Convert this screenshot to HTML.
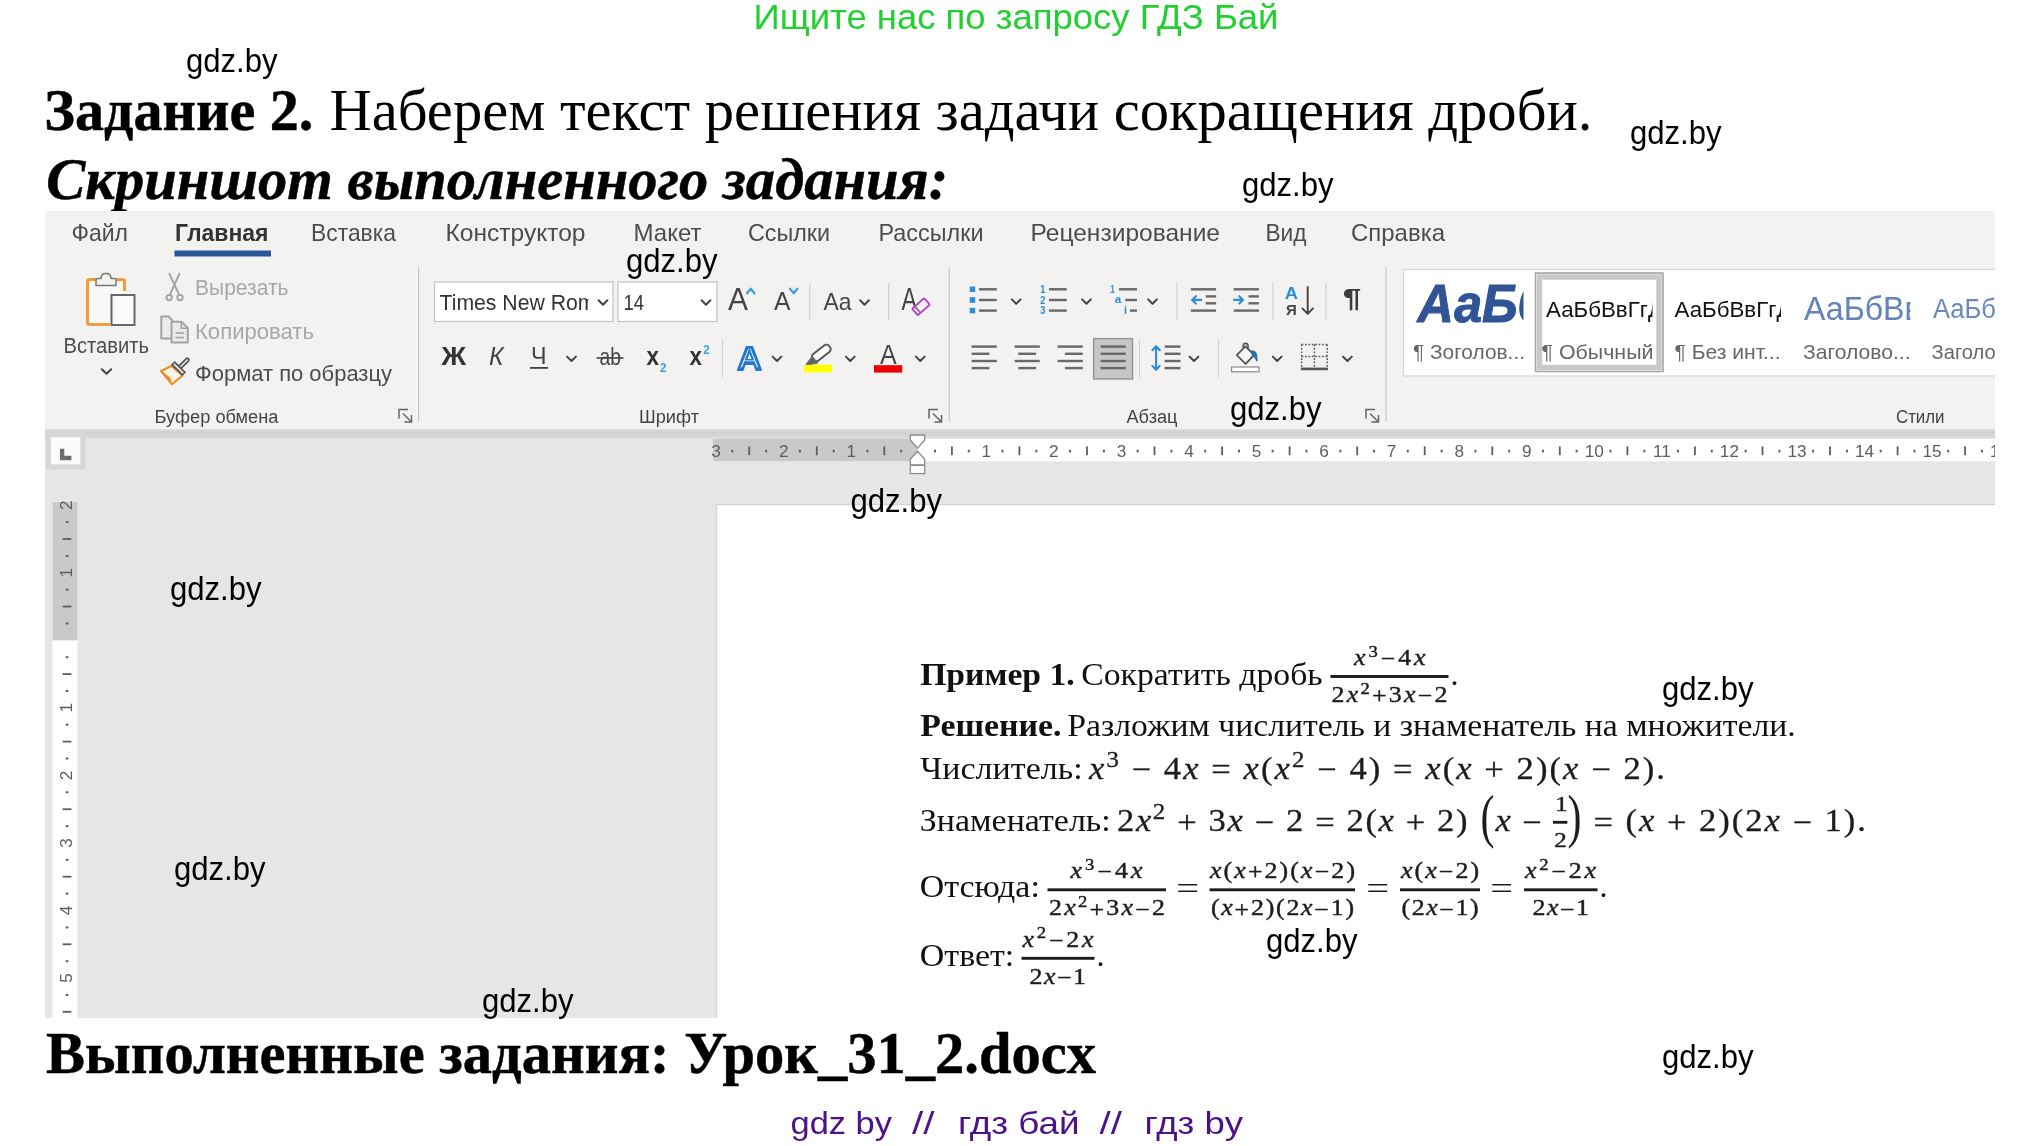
<!DOCTYPE html>
<html lang="ru"><head><meta charset="utf-8"><title>ГДЗ Задание 2</title>
<style>
html,body{margin:0;padding:0;background:#fff;}
body{width:2034px;height:1146px;overflow:hidden;position:relative;}
svg{position:absolute;left:0;top:0;display:block;will-change:transform;}
.s{font-family:"Liberation Sans",sans-serif;}
.sb{font-family:"Liberation Sans",sans-serif;font-weight:bold;}
.si{font-family:"Liberation Sans",sans-serif;font-style:italic;}
.r{font-family:"Liberation Serif",serif;}
.rb{font-family:"Liberation Serif",serif;font-weight:bold;}
.ri{font-family:"Liberation Serif",serif;font-style:italic;}
.rbi{font-family:"Liberation Serif",serif;font-weight:bold;font-style:italic;}
text{white-space:pre;}
</style></head><body>
<svg width="2034" height="1146" viewBox="0 0 2034 1146">
<text x="753.5" y="29" font-size="35.5" class="s" fill="#21cf31" textLength="525" lengthAdjust="spacingAndGlyphs">Ищите нас по запросу ГДЗ Бай</text>
<text x="44.3" y="129.5" font-size="60" class="rb" fill="#000" textLength="269" lengthAdjust="spacingAndGlyphs" stroke="#000" stroke-width="0.5">Задание 2.</text>
<text x="329.5" y="129.5" font-size="60" class="r" fill="#000" textLength="1263" lengthAdjust="spacingAndGlyphs">Наберем текст решения задачи сокращения дроби.</text>
<text x="46.2" y="198.5" font-size="60" class="rbi" fill="#000" textLength="902" lengthAdjust="spacingAndGlyphs" stroke="#000" stroke-width="0.5">Скриншот выполненного задания:</text>
<text x="46" y="1072.5" font-size="60" class="rb" fill="#000" textLength="1050" lengthAdjust="spacingAndGlyphs" stroke="#000" stroke-width="0.5">Выполненные задания: Урок_31_2.docx</text>
<text x="790.5" y="1133.5" font-size="32" class="s" fill="#4b1289" textLength="101.5" lengthAdjust="spacingAndGlyphs">gdz by</text>
<text x="912" y="1133.5" font-size="32" class="s" fill="#4b1289" textLength="22.5" lengthAdjust="spacingAndGlyphs">//</text>
<text x="958" y="1133.5" font-size="32" class="s" fill="#4b1289" textLength="121.5" lengthAdjust="spacingAndGlyphs">гдз бай</text>
<text x="1099.5" y="1133.5" font-size="32" class="s" fill="#4b1289" textLength="22.5" lengthAdjust="spacingAndGlyphs">//</text>
<text x="1144.5" y="1133.5" font-size="32" class="s" fill="#4b1289" textLength="98.5" lengthAdjust="spacingAndGlyphs">гдз by</text>
<clipPath id="shot"><rect x="45" y="211" width="1950" height="807"/></clipPath>
<g clip-path="url(#shot)">
<rect x="45" y="211" width="1950" height="807" fill="#e6e6e6"/>
<rect x="45" y="211" width="1950" height="219" fill="#f3f2f1"/>
<linearGradient id="shd" x1="0" y1="0" x2="0" y2="1"><stop offset="0" stop-color="#e2e1e0"/><stop offset="0.3" stop-color="#d0d0d0"/><stop offset="1" stop-color="#dcdcdc"/></linearGradient>
<rect x="45" y="429" width="1950" height="9.7" fill="url(#shd)"/>
<text x="71.5" y="240.5" font-size="24" class="s" fill="#4c4c4c" textLength="56.5" lengthAdjust="spacingAndGlyphs">Файл</text>
<text x="175" y="240.5" font-size="24" class="sb" fill="#333" textLength="93.5" lengthAdjust="spacingAndGlyphs">Главная</text>
<rect x="174.5" y="250.5" width="96.5" height="6" fill="#2b579a"/>
<text x="311" y="240.5" font-size="24" class="s" fill="#4c4c4c" textLength="85" lengthAdjust="spacingAndGlyphs">Вставка</text>
<text x="445.5" y="240.5" font-size="24" class="s" fill="#4c4c4c" textLength="140" lengthAdjust="spacingAndGlyphs">Конструктор</text>
<text x="633.5" y="240.5" font-size="24" class="s" fill="#4c4c4c" textLength="68" lengthAdjust="spacingAndGlyphs">Макет</text>
<text x="748" y="240.5" font-size="24" class="s" fill="#4c4c4c" textLength="82" lengthAdjust="spacingAndGlyphs">Ссылки</text>
<text x="878.5" y="240.5" font-size="24" class="s" fill="#4c4c4c" textLength="105" lengthAdjust="spacingAndGlyphs">Рассылки</text>
<text x="1030.5" y="240.5" font-size="24" class="s" fill="#4c4c4c" textLength="189.5" lengthAdjust="spacingAndGlyphs">Рецензирование</text>
<text x="1265.5" y="240.5" font-size="24" class="s" fill="#4c4c4c" textLength="41" lengthAdjust="spacingAndGlyphs">Вид</text>
<text x="1351" y="240.5" font-size="24" class="s" fill="#4c4c4c" textLength="94" lengthAdjust="spacingAndGlyphs">Справка</text>
<line x1="418.6" y1="267" x2="418.6" y2="421.5" stroke="#c8c6c4" stroke-width="1.2" />
<line x1="949.3" y1="267" x2="949.3" y2="421.5" stroke="#c8c6c4" stroke-width="1.2" />
<line x1="1386.1" y1="267" x2="1386.1" y2="421.5" stroke="#c8c6c4" stroke-width="1.2" />
<text x="154.5" y="423.2" font-size="18" class="s" fill="#444" textLength="124" lengthAdjust="spacingAndGlyphs">Буфер обмена</text>
<text x="639" y="423.2" font-size="18" class="s" fill="#444" textLength="60" lengthAdjust="spacingAndGlyphs">Шрифт</text>
<text x="1126.5" y="423.2" font-size="18" class="s" fill="#444" textLength="51" lengthAdjust="spacingAndGlyphs">Абзац</text>
<text x="1896" y="423.2" font-size="18" class="s" fill="#444" textLength="48.5" lengthAdjust="spacingAndGlyphs">Стили</text>
<path d="M408 409.5 H399 V418.5" fill="none" stroke="#666" stroke-width="1.5"/>
<path d="M403 413.5 L411 421.5 M411.5 415.0 V422.0 H404.5" fill="none" stroke="#666" stroke-width="1.5"/>
<path d="M938 409.5 H929 V418.5" fill="none" stroke="#666" stroke-width="1.5"/>
<path d="M933 413.5 L941 421.5 M941.5 415.0 V422.0 H934.5" fill="none" stroke="#666" stroke-width="1.5"/>
<path d="M1375 409.5 H1366 V418.5" fill="none" stroke="#666" stroke-width="1.5"/>
<path d="M1370 413.5 L1378 421.5 M1378.5 415.0 V422.0 H1371.5" fill="none" stroke="#666" stroke-width="1.5"/>
<text x="63.5" y="352.5" font-size="22.5" class="s" fill="#4c4c4c" textLength="85.5" lengthAdjust="spacingAndGlyphs">Вставить</text>
<path d="M101.8 369.2 L106.5 373.8 L111.2 369.2" fill="none" stroke="#444" stroke-width="2" stroke-linecap="round" stroke-linejoin="round"/>
<text x="195" y="295" font-size="22.5" class="s" fill="#a8a8a8" textLength="93.5" lengthAdjust="spacingAndGlyphs">Вырезать</text>
<text x="195" y="338.5" font-size="22.5" class="s" fill="#a8a8a8" textLength="119" lengthAdjust="spacingAndGlyphs">Копировать</text>
<text x="195" y="381" font-size="22.5" class="s" fill="#4c4c4c" textLength="197" lengthAdjust="spacingAndGlyphs">Формат по образцу</text>
<rect x="45.7" y="431.6" width="39.8" height="38" fill="#d7d7d7"/>
<rect x="50.9" y="437.2" width="29.4" height="27.2" fill="#fbfbfb"/>
<path d="M62.1 448.7 V458 H71.4" fill="none" stroke="#6e6e6e" stroke-width="4.4"/>
<rect x="713" y="438.8" width="204.5" height="22.3" fill="#c9c9c9"/>
<rect x="917.5" y="438.8" width="1077.5" height="22.5" fill="#ffffff"/>
<text x="716.15" y="456.6" font-size="17.2" class="s" fill="#5e5e5e" text-anchor="middle">3</text>
<rect x="731.3" y="449.8" width="2" height="2.6" fill="#5e5e5e"/>
<rect x="748.3" y="446.4" width="1.8" height="8.8" fill="#5e5e5e"/>
<rect x="765.1" y="449.8" width="2" height="2.6" fill="#5e5e5e"/>
<text x="783.6999999999999" y="456.6" font-size="17.2" class="s" fill="#5e5e5e" text-anchor="middle">2</text>
<rect x="798.9" y="449.8" width="2" height="2.6" fill="#5e5e5e"/>
<rect x="815.9" y="446.4" width="1.8" height="8.8" fill="#5e5e5e"/>
<rect x="832.7" y="449.8" width="2" height="2.6" fill="#5e5e5e"/>
<text x="851.25" y="456.6" font-size="17.2" class="s" fill="#5e5e5e" text-anchor="middle">1</text>
<rect x="866.4" y="449.8" width="2" height="2.6" fill="#5e5e5e"/>
<rect x="883.4" y="446.4" width="1.8" height="8.8" fill="#5e5e5e"/>
<rect x="900.2" y="449.8" width="2" height="2.6" fill="#5e5e5e"/>
<rect x="934.0" y="449.8" width="2" height="2.6" fill="#5e5e5e"/>
<rect x="951.0" y="446.4" width="1.8" height="8.8" fill="#5e5e5e"/>
<rect x="967.8" y="449.8" width="2" height="2.6" fill="#5e5e5e"/>
<text x="986.3499999999999" y="456.6" font-size="17.2" class="s" fill="#5e5e5e" text-anchor="middle">1</text>
<rect x="1001.5" y="449.8" width="2" height="2.6" fill="#5e5e5e"/>
<rect x="1018.5" y="446.4" width="1.8" height="8.8" fill="#5e5e5e"/>
<rect x="1035.3" y="449.8" width="2" height="2.6" fill="#5e5e5e"/>
<text x="1053.8999999999999" y="456.6" font-size="17.2" class="s" fill="#5e5e5e" text-anchor="middle">2</text>
<rect x="1069.1" y="449.8" width="2" height="2.6" fill="#5e5e5e"/>
<rect x="1086.1" y="446.4" width="1.8" height="8.8" fill="#5e5e5e"/>
<rect x="1102.9" y="449.8" width="2" height="2.6" fill="#5e5e5e"/>
<text x="1121.45" y="456.6" font-size="17.2" class="s" fill="#5e5e5e" text-anchor="middle">3</text>
<rect x="1136.6" y="449.8" width="2" height="2.6" fill="#5e5e5e"/>
<rect x="1153.6" y="446.4" width="1.8" height="8.8" fill="#5e5e5e"/>
<rect x="1170.4" y="449.8" width="2" height="2.6" fill="#5e5e5e"/>
<text x="1189.0" y="456.6" font-size="17.2" class="s" fill="#5e5e5e" text-anchor="middle">4</text>
<rect x="1204.2" y="449.8" width="2" height="2.6" fill="#5e5e5e"/>
<rect x="1221.2" y="446.4" width="1.8" height="8.8" fill="#5e5e5e"/>
<rect x="1238.0" y="449.8" width="2" height="2.6" fill="#5e5e5e"/>
<text x="1256.55" y="456.6" font-size="17.2" class="s" fill="#5e5e5e" text-anchor="middle">5</text>
<rect x="1271.7" y="449.8" width="2" height="2.6" fill="#5e5e5e"/>
<rect x="1288.7" y="446.4" width="1.8" height="8.8" fill="#5e5e5e"/>
<rect x="1305.5" y="449.8" width="2" height="2.6" fill="#5e5e5e"/>
<text x="1324.1" y="456.6" font-size="17.2" class="s" fill="#5e5e5e" text-anchor="middle">6</text>
<rect x="1339.3" y="449.8" width="2" height="2.6" fill="#5e5e5e"/>
<rect x="1356.3" y="446.4" width="1.8" height="8.8" fill="#5e5e5e"/>
<rect x="1373.1" y="449.8" width="2" height="2.6" fill="#5e5e5e"/>
<text x="1391.6499999999999" y="456.6" font-size="17.2" class="s" fill="#5e5e5e" text-anchor="middle">7</text>
<rect x="1406.8" y="449.8" width="2" height="2.6" fill="#5e5e5e"/>
<rect x="1423.8" y="446.4" width="1.8" height="8.8" fill="#5e5e5e"/>
<rect x="1440.6" y="449.8" width="2" height="2.6" fill="#5e5e5e"/>
<text x="1459.2" y="456.6" font-size="17.2" class="s" fill="#5e5e5e" text-anchor="middle">8</text>
<rect x="1474.4" y="449.8" width="2" height="2.6" fill="#5e5e5e"/>
<rect x="1491.4" y="446.4" width="1.8" height="8.8" fill="#5e5e5e"/>
<rect x="1508.2" y="449.8" width="2" height="2.6" fill="#5e5e5e"/>
<text x="1526.7499999999998" y="456.6" font-size="17.2" class="s" fill="#5e5e5e" text-anchor="middle">9</text>
<rect x="1541.9" y="449.8" width="2" height="2.6" fill="#5e5e5e"/>
<rect x="1558.9" y="446.4" width="1.8" height="8.8" fill="#5e5e5e"/>
<rect x="1575.7" y="449.8" width="2" height="2.6" fill="#5e5e5e"/>
<text x="1594.3" y="456.6" font-size="17.2" class="s" fill="#5e5e5e" text-anchor="middle">10</text>
<rect x="1609.5" y="449.8" width="2" height="2.6" fill="#5e5e5e"/>
<rect x="1626.5" y="446.4" width="1.8" height="8.8" fill="#5e5e5e"/>
<rect x="1643.3" y="449.8" width="2" height="2.6" fill="#5e5e5e"/>
<text x="1661.85" y="456.6" font-size="17.2" class="s" fill="#5e5e5e" text-anchor="middle">11</text>
<rect x="1677.0" y="449.8" width="2" height="2.6" fill="#5e5e5e"/>
<rect x="1694.0" y="446.4" width="1.8" height="8.8" fill="#5e5e5e"/>
<rect x="1710.8" y="449.8" width="2" height="2.6" fill="#5e5e5e"/>
<text x="1729.3999999999999" y="456.6" font-size="17.2" class="s" fill="#5e5e5e" text-anchor="middle">12</text>
<rect x="1744.6" y="449.8" width="2" height="2.6" fill="#5e5e5e"/>
<rect x="1761.6" y="446.4" width="1.8" height="8.8" fill="#5e5e5e"/>
<rect x="1778.4" y="449.8" width="2" height="2.6" fill="#5e5e5e"/>
<text x="1796.95" y="456.6" font-size="17.2" class="s" fill="#5e5e5e" text-anchor="middle">13</text>
<rect x="1812.1" y="449.8" width="2" height="2.6" fill="#5e5e5e"/>
<rect x="1829.1" y="446.4" width="1.8" height="8.8" fill="#5e5e5e"/>
<rect x="1845.9" y="449.8" width="2" height="2.6" fill="#5e5e5e"/>
<text x="1864.4999999999998" y="456.6" font-size="17.2" class="s" fill="#5e5e5e" text-anchor="middle">14</text>
<rect x="1879.7" y="449.8" width="2" height="2.6" fill="#5e5e5e"/>
<rect x="1896.7" y="446.4" width="1.8" height="8.8" fill="#5e5e5e"/>
<rect x="1913.5" y="449.8" width="2" height="2.6" fill="#5e5e5e"/>
<text x="1932.05" y="456.6" font-size="17.2" class="s" fill="#5e5e5e" text-anchor="middle">15</text>
<rect x="1947.2" y="449.8" width="2" height="2.6" fill="#5e5e5e"/>
<rect x="1964.2" y="446.4" width="1.8" height="8.8" fill="#5e5e5e"/>
<rect x="1981.0" y="449.8" width="2" height="2.6" fill="#5e5e5e"/>
<text x="1999.6" y="456.6" font-size="17.2" class="s" fill="#5e5e5e" text-anchor="middle">16</text>
<rect x="2014.8" y="449.8" width="2" height="2.6" fill="#5e5e5e"/>
<rect x="2031.8" y="446.4" width="1.8" height="8.8" fill="#5e5e5e"/>
<rect x="2048.6" y="449.8" width="2" height="2.6" fill="#5e5e5e"/>
<path d="M910.3 435 H924.7 V440 L917.5 448.3 L910.3 440 Z" fill="#fff" stroke="#8c8c8c" stroke-width="1.3" stroke-linejoin="round"/>
<path d="M910.3 464.8 V459.3 L917.5 451.2 L924.7 459.3 V464.8 Z" fill="#fff" stroke="#8c8c8c" stroke-width="1.3" stroke-linejoin="round"/>
<rect x="910.3" y="465.4" width="14.4" height="8.2" fill="#fff" stroke="#8c8c8c" stroke-width="1.3"/>
<rect x="52.5" y="502" width="25" height="138.5" fill="#c9c9c9"/>
<rect x="52.5" y="640.5" width="25" height="380" fill="#ffffff"/>
<text transform="translate(71.5 505.2) rotate(-90)" font-size="17.2" class="s" fill="#5e5e5e" text-anchor="middle">2</text>
<rect x="65.8" y="521.1" width="2.6" height="2" fill="#5e5e5e"/>
<rect x="62.6" y="538.1" width="8.8" height="1.8" fill="#5e5e5e"/>
<rect x="65.8" y="554.9" width="2.6" height="2" fill="#5e5e5e"/>
<text transform="translate(71.5 572.8) rotate(-90)" font-size="17.2" class="s" fill="#5e5e5e" text-anchor="middle">1</text>
<rect x="65.8" y="588.6" width="2.6" height="2" fill="#5e5e5e"/>
<rect x="62.6" y="605.6" width="8.8" height="1.8" fill="#5e5e5e"/>
<rect x="65.8" y="622.4" width="2.6" height="2" fill="#5e5e5e"/>
<rect x="65.8" y="656.2" width="2.6" height="2" fill="#5e5e5e"/>
<rect x="62.6" y="673.2" width="8.8" height="1.8" fill="#5e5e5e"/>
<rect x="65.8" y="690.0" width="2.6" height="2" fill="#5e5e5e"/>
<text transform="translate(71.5 707.8) rotate(-90)" font-size="17.2" class="s" fill="#5e5e5e" text-anchor="middle">1</text>
<rect x="65.8" y="723.7" width="2.6" height="2" fill="#5e5e5e"/>
<rect x="62.6" y="740.7" width="8.8" height="1.8" fill="#5e5e5e"/>
<rect x="65.8" y="757.5" width="2.6" height="2" fill="#5e5e5e"/>
<text transform="translate(71.5 775.4) rotate(-90)" font-size="17.2" class="s" fill="#5e5e5e" text-anchor="middle">2</text>
<rect x="65.8" y="791.3" width="2.6" height="2" fill="#5e5e5e"/>
<rect x="62.6" y="808.3" width="8.8" height="1.8" fill="#5e5e5e"/>
<rect x="65.8" y="825.1" width="2.6" height="2" fill="#5e5e5e"/>
<text transform="translate(71.5 842.9) rotate(-90)" font-size="17.2" class="s" fill="#5e5e5e" text-anchor="middle">3</text>
<rect x="65.8" y="858.8" width="2.6" height="2" fill="#5e5e5e"/>
<rect x="62.6" y="875.8" width="8.8" height="1.8" fill="#5e5e5e"/>
<rect x="65.8" y="892.6" width="2.6" height="2" fill="#5e5e5e"/>
<text transform="translate(71.5 910.5) rotate(-90)" font-size="17.2" class="s" fill="#5e5e5e" text-anchor="middle">4</text>
<rect x="65.8" y="926.4" width="2.6" height="2" fill="#5e5e5e"/>
<rect x="62.6" y="943.4" width="8.8" height="1.8" fill="#5e5e5e"/>
<rect x="65.8" y="960.2" width="2.6" height="2" fill="#5e5e5e"/>
<text transform="translate(71.5 978.0) rotate(-90)" font-size="17.2" class="s" fill="#5e5e5e" text-anchor="middle">5</text>
<rect x="65.8" y="993.9" width="2.6" height="2" fill="#5e5e5e"/>
<rect x="62.6" y="1010.9" width="8.8" height="1.8" fill="#5e5e5e"/>
<rect x="65.8" y="1027.7" width="2.6" height="2" fill="#5e5e5e"/>
<text transform="translate(71.5 1045.6) rotate(-90)" font-size="17.2" class="s" fill="#5e5e5e" text-anchor="middle">6</text>
<rect x="65.8" y="1061.5" width="2.6" height="2" fill="#5e5e5e"/>
<rect x="62.6" y="1078.5" width="8.8" height="1.8" fill="#5e5e5e"/>
<rect x="65.8" y="1095.3" width="2.6" height="2" fill="#5e5e5e"/>
<rect x="716.5" y="504.5" width="1280.5" height="520" fill="#ffffff" stroke="#d4d4d4" stroke-width="1.4"/>
<text x="920.2" y="684.5" font-size="32" class="rb" fill="#111" textLength="154.5" lengthAdjust="spacingAndGlyphs">Пример 1.</text>
<text x="1081.2" y="684.5" font-size="32" class="r" fill="#111" textLength="241.5" lengthAdjust="spacingAndGlyphs">Сократить дробь</text>
<rect x="1330.5" y="675.0500000000001" width="118.0" height="2.9" fill="#1c1c1c"/>
<text transform="translate(1354 665.0) scale(1.15 1)" font-size="22.5" class="r" fill="#1c1c1c" stroke="#1c1c1c" stroke-width="0.4" textLength="62.17" lengthAdjust="spacing"><tspan class="ri">x</tspan><tspan font-size="16.2" dy="-8.32">3</tspan><tspan dy="9.44">−</tspan><tspan dy="-1.12">4</tspan><tspan class="ri">x</tspan></text>
<text transform="translate(1331.5 702.1) scale(1.15 1)" font-size="22.5" class="r" fill="#1c1c1c" stroke="#1c1c1c" stroke-width="0.4" textLength="100.87" lengthAdjust="spacing">2<tspan class="ri">x</tspan><tspan font-size="16.2" dy="-8.32">2</tspan><tspan dy="9.44">+</tspan><tspan dy="-1.12">3</tspan><tspan class="ri">x</tspan><tspan dy="1.12">−</tspan><tspan dy="-1.12">2</tspan></text>
<text x="1450.5" y="684.5" font-size="32" class="r" fill="#111">.</text>
<text x="920.2" y="736" font-size="32" class="rb" fill="#111" textLength="141.3" lengthAdjust="spacingAndGlyphs">Решение.</text>
<text x="1067.3" y="736" font-size="32" class="r" fill="#111" textLength="728.5" lengthAdjust="spacingAndGlyphs">Разложим числитель и знаменатель на множители.</text>
<text x="920.2" y="778.5" font-size="32" class="r" fill="#111" textLength="162.5" lengthAdjust="spacingAndGlyphs">Числитель:</text>
<text transform="translate(1089 778.5) scale(1.08 1)" font-size="32" class="r" fill="#1c1c1c" stroke="#1c1c1c" stroke-width="0.3" textLength="533.33" lengthAdjust="spacing"><tspan class="ri">x</tspan><tspan font-size="23.04" dy="-11.84">3</tspan><tspan dy="11.84"> </tspan><tspan dy="1.6">−</tspan><tspan dy="-1.6"> </tspan>4<tspan class="ri">x</tspan> <tspan dy="1.6">=</tspan><tspan dy="-1.6"> </tspan><tspan class="ri">x</tspan>(<tspan class="ri">x</tspan><tspan font-size="23.04" dy="-11.84">2</tspan><tspan dy="11.84"> </tspan><tspan dy="1.6">−</tspan><tspan dy="-1.6"> </tspan>4) <tspan dy="1.6">=</tspan><tspan dy="-1.6"> </tspan><tspan class="ri">x</tspan>(<tspan class="ri">x</tspan> <tspan dy="1.6">+</tspan><tspan dy="-1.6"> </tspan>2)(<tspan class="ri">x</tspan> <tspan dy="1.6">−</tspan><tspan dy="-1.6"> </tspan>2).</text>
<text x="919.8" y="831" font-size="32" class="r" fill="#111" textLength="191" lengthAdjust="spacingAndGlyphs">Знаменатель:</text>
<text transform="translate(1117 831) scale(1.08 1)" font-size="32" class="r" fill="#1c1c1c" stroke="#1c1c1c" stroke-width="0.3" textLength="324.54" lengthAdjust="spacing">2<tspan class="ri">x</tspan><tspan font-size="23.04" dy="-11.84">2</tspan><tspan dy="11.84"> </tspan><tspan dy="1.6">+</tspan><tspan dy="-1.6"> </tspan>3<tspan class="ri">x</tspan> <tspan dy="1.6">−</tspan><tspan dy="-1.6"> </tspan>2 <tspan dy="1.6">=</tspan><tspan dy="-1.6"> </tspan>2(<tspan class="ri">x</tspan> <tspan dy="1.6">+</tspan><tspan dy="-1.6"> </tspan>2)</text>
<text x="1480.6" y="836.1" font-size="60" class="r" fill="#1c1c1c" textLength="14" lengthAdjust="spacingAndGlyphs">(</text>
<text transform="translate(1495.5 831) scale(1.08 1)" font-size="32" class="r" fill="#1c1c1c" stroke="#1c1c1c" stroke-width="0.3" textLength="42.59" lengthAdjust="spacing"><tspan class="ri">x</tspan> <tspan dy="1.6">−</tspan></text>
<rect x="1553" y="820.9" width="14.3" height="2.8" fill="#1c1c1c"/>
<text transform="translate(1555.2 810.8) scale(1.2 1)" font-size="20.8" class="r" fill="#1c1c1c" stroke="#1c1c1c" stroke-width="0.4">1</text>
<text transform="translate(1554.3 847.4) scale(1.2 1)" font-size="20.8" class="r" fill="#1c1c1c" stroke="#1c1c1c" stroke-width="0.4">2</text>
<text x="1567.6" y="836.1" font-size="60" class="r" fill="#1c1c1c" textLength="14" lengthAdjust="spacingAndGlyphs">)</text>
<text transform="translate(1593.5 831) scale(1.08 1)" font-size="32" class="r" fill="#1c1c1c" stroke="#1c1c1c" stroke-width="0.3" textLength="252.31" lengthAdjust="spacing"><tspan dy="1.6">=</tspan><tspan dy="-1.6"> </tspan>(<tspan class="ri">x</tspan> <tspan dy="1.6">+</tspan><tspan dy="-1.6"> </tspan>2)(2<tspan class="ri">x</tspan> <tspan dy="1.6">−</tspan><tspan dy="-1.6"> </tspan>1).</text>
<text x="919.8" y="897" font-size="32" class="r" fill="#111" textLength="120" lengthAdjust="spacingAndGlyphs">Отсюда:</text>
<rect x="1047.5" y="888.35" width="118.5" height="2.9" fill="#1c1c1c"/>
<text transform="translate(1070.5 878.3) scale(1.15 1)" font-size="22.5" class="r" fill="#1c1c1c" stroke="#1c1c1c" stroke-width="0.4" textLength="62.61" lengthAdjust="spacing"><tspan class="ri">x</tspan><tspan font-size="16.2" dy="-8.32">3</tspan><tspan dy="9.44">−</tspan><tspan dy="-1.12">4</tspan><tspan class="ri">x</tspan></text>
<text transform="translate(1049 915.4) scale(1.15 1)" font-size="22.5" class="r" fill="#1c1c1c" stroke="#1c1c1c" stroke-width="0.4" textLength="100.87" lengthAdjust="spacing">2<tspan class="ri">x</tspan><tspan font-size="16.2" dy="-8.32">2</tspan><tspan dy="9.44">+</tspan><tspan dy="-1.12">3</tspan><tspan class="ri">x</tspan><tspan dy="1.12">−</tspan><tspan dy="-1.12">2</tspan></text>
<text transform="translate(1176.3 898.8) scale(1.27 1)" font-size="32" class="r" fill="#1c1c1c" stroke="#1c1c1c" stroke-width="0">=</text>
<rect x="1209.5" y="888.35" width="145.5" height="2.9" fill="#1c1c1c"/>
<text transform="translate(1210 878.3) scale(1.15 1)" font-size="22.5" class="r" fill="#1c1c1c" stroke="#1c1c1c" stroke-width="0.4" textLength="126.09" lengthAdjust="spacing"><tspan class="ri">x</tspan>(<tspan class="ri">x</tspan><tspan dy="1.12">+</tspan><tspan dy="-1.12">2</tspan>)(<tspan class="ri">x</tspan><tspan dy="1.12">−</tspan><tspan dy="-1.12">2</tspan>)</text>
<text transform="translate(1211 915.4) scale(1.15 1)" font-size="22.5" class="r" fill="#1c1c1c" stroke="#1c1c1c" stroke-width="0.4" textLength="124.35" lengthAdjust="spacing">(<tspan class="ri">x</tspan><tspan dy="1.12">+</tspan><tspan dy="-1.12">2</tspan>)(2<tspan class="ri">x</tspan><tspan dy="1.12">−</tspan><tspan dy="-1.12">1</tspan>)</text>
<text transform="translate(1366.3 898.8) scale(1.27 1)" font-size="32" class="r" fill="#1c1c1c" stroke="#1c1c1c" stroke-width="0">=</text>
<rect x="1400" y="888.35" width="80" height="2.9" fill="#1c1c1c"/>
<text transform="translate(1401 878.3) scale(1.15 1)" font-size="22.5" class="r" fill="#1c1c1c" stroke="#1c1c1c" stroke-width="0.4" textLength="67.83" lengthAdjust="spacing"><tspan class="ri">x</tspan>(<tspan class="ri">x</tspan><tspan dy="1.12">−</tspan><tspan dy="-1.12">2</tspan>)</text>
<text transform="translate(1401.5 915.4) scale(1.15 1)" font-size="22.5" class="r" fill="#1c1c1c" stroke="#1c1c1c" stroke-width="0.4" textLength="66.96" lengthAdjust="spacing">(2<tspan class="ri">x</tspan><tspan dy="1.12">−</tspan><tspan dy="-1.12">1</tspan>)</text>
<text transform="translate(1490.3 898.8) scale(1.27 1)" font-size="32" class="r" fill="#1c1c1c" stroke="#1c1c1c" stroke-width="0">=</text>
<rect x="1524" y="888.35" width="73.5" height="2.9" fill="#1c1c1c"/>
<text transform="translate(1525 878.3) scale(1.15 1)" font-size="22.5" class="r" fill="#1c1c1c" stroke="#1c1c1c" stroke-width="0.4" textLength="61.74" lengthAdjust="spacing"><tspan class="ri">x</tspan><tspan font-size="16.2" dy="-8.32">2</tspan><tspan dy="9.44">−</tspan><tspan dy="-1.12">2</tspan><tspan class="ri">x</tspan></text>
<text transform="translate(1532.5 915.4) scale(1.15 1)" font-size="22.5" class="r" fill="#1c1c1c" stroke="#1c1c1c" stroke-width="0.4" textLength="49.13" lengthAdjust="spacing">2<tspan class="ri">x</tspan><tspan dy="1.12">−</tspan><tspan dy="-1.12">1</tspan></text>
<text x="1599.5" y="897" font-size="32" class="r" fill="#111">.</text>
<text x="919.8" y="965.5" font-size="32" class="r" fill="#111" textLength="94.5" lengthAdjust="spacingAndGlyphs">Ответ:</text>
<rect x="1021.5" y="956.85" width="73.0" height="2.9" fill="#1c1c1c"/>
<text transform="translate(1022.5 946.8) scale(1.15 1)" font-size="22.5" class="r" fill="#1c1c1c" stroke="#1c1c1c" stroke-width="0.4" textLength="61.74" lengthAdjust="spacing"><tspan class="ri">x</tspan><tspan font-size="16.2" dy="-8.32">2</tspan><tspan dy="9.44">−</tspan><tspan dy="-1.12">2</tspan><tspan class="ri">x</tspan></text>
<text transform="translate(1029.5 983.9) scale(1.15 1)" font-size="22.5" class="r" fill="#1c1c1c" stroke="#1c1c1c" stroke-width="0.4" textLength="49.13" lengthAdjust="spacing">2<tspan class="ri">x</tspan><tspan dy="1.12">−</tspan><tspan dy="-1.12">1</tspan></text>
<text x="1096.5" y="965.5" font-size="32" class="r" fill="#111">.</text>
<rect x="434.5" y="282" width="178.5" height="39.5" fill="#fff" stroke="#c8c6c4" stroke-width="1.3"/>
<clipPath id="fn"><rect x="436" y="283" width="152.6" height="37"/></clipPath>
<g clip-path="url(#fn)">
<text x="439.5" y="309.5" font-size="22.5" class="s" fill="#333" textLength="156" lengthAdjust="spacingAndGlyphs">Times New Rom</text>
</g>
<path d="M598.6 300.3 L603 304.7 L607.4 300.3" fill="none" stroke="#444" stroke-width="2" stroke-linecap="round" stroke-linejoin="round"/>
<rect x="618" y="282" width="99" height="39.5" fill="#fff" stroke="#c8c6c4" stroke-width="1.3"/>
<text x="623.5" y="309.5" font-size="22.5" class="s" fill="#333" textLength="20.5" lengthAdjust="spacingAndGlyphs">14</text>
<path d="M701.6 300.3 L706 304.7 L710.4 300.3" fill="none" stroke="#444" stroke-width="2" stroke-linecap="round" stroke-linejoin="round"/>
<line x1="809.8" y1="283" x2="809.8" y2="320" stroke="#d2d0ce" stroke-width="1.2" />
<line x1="888.7" y1="283" x2="888.7" y2="320" stroke="#d2d0ce" stroke-width="1.2" />
<line x1="722.5" y1="339.5" x2="722.5" y2="377.5" stroke="#d2d0ce" stroke-width="1.2" />
<line x1="1177" y1="283" x2="1177" y2="320" stroke="#d2d0ce" stroke-width="1.2" />
<line x1="1273" y1="283" x2="1273" y2="320" stroke="#d2d0ce" stroke-width="1.2" />
<line x1="1326" y1="283" x2="1326" y2="320" stroke="#d2d0ce" stroke-width="1.2" />
<line x1="1139.5" y1="339.5" x2="1139.5" y2="377.5" stroke="#d2d0ce" stroke-width="1.2" />
<line x1="1218.5" y1="339.5" x2="1218.5" y2="377.5" stroke="#d2d0ce" stroke-width="1.2" />
<text x="728" y="310" font-size="31" class="s" fill="#444" textLength="20" lengthAdjust="spacingAndGlyphs">A</text>
<path d="M747.0 293.3 L750.7 288.7 L754.4000000000001 293.3" fill="none" stroke="#3e9fe0" stroke-width="2.3" stroke-linecap="round" stroke-linejoin="round"/>
<text x="774" y="310" font-size="25" class="s" fill="#444" textLength="16.5" lengthAdjust="spacingAndGlyphs">A</text>
<path d="M790.0 288.7 L793.7 293.3 L797.4000000000001 288.7" fill="none" stroke="#3e9fe0" stroke-width="2.3" stroke-linecap="round" stroke-linejoin="round"/>
<text x="823.5" y="309.5" font-size="24" class="s" fill="#444" textLength="28" lengthAdjust="spacingAndGlyphs">Aa</text>
<path d="M860.1 300.3 L864.5 304.7 L868.9 300.3" fill="none" stroke="#444" stroke-width="2" stroke-linecap="round" stroke-linejoin="round"/>
<text x="901.5" y="309.5" font-size="31.5" class="s" fill="#444" textLength="15.5" lengthAdjust="spacingAndGlyphs">A</text>
<g transform="translate(921 306.7) rotate(-42)"><rect x="-8" y="-4.3" width="16" height="8.6" rx="1" fill="#f3f2f1" stroke="#b24cc0" stroke-width="2"/><line x1="-4.5" y1="-4.3" x2="-4.5" y2="4.3" stroke="#b24cc0" stroke-width="1.8"/></g>
<text x="441.5" y="365" font-size="26" class="sb" fill="#333" textLength="24.5" lengthAdjust="spacingAndGlyphs">Ж</text>
<text x="489" y="365" font-size="25" class="si" fill="#444" textLength="14.5" lengthAdjust="spacingAndGlyphs">К</text>
<text x="531" y="363.5" font-size="23.5" class="s" fill="#444" textLength="15.5" lengthAdjust="spacingAndGlyphs">Ч</text>
<rect x="530" y="367" width="18" height="1.8" fill="#444"/>
<path d="M567.1 356.6 L571.5 361.0 L575.9 356.6" fill="none" stroke="#444" stroke-width="2" stroke-linecap="round" stroke-linejoin="round"/>
<text x="599.5" y="365" font-size="23" class="s" fill="#444" textLength="21.5" lengthAdjust="spacingAndGlyphs">ab</text>
<rect x="596.5" y="357.2" width="27" height="1.6" fill="#444"/>
<text x="646.5" y="365" font-size="25" class="sb" fill="#333" textLength="12.5" lengthAdjust="spacingAndGlyphs">x</text>
<text x="660" y="372.3" font-size="12.5" class="sb" fill="#3e9fe0" textLength="6.5" lengthAdjust="spacingAndGlyphs">2</text>
<text x="689.5" y="365" font-size="25" class="sb" fill="#333" textLength="12.5" lengthAdjust="spacingAndGlyphs">x</text>
<text x="703.3" y="353.6" font-size="12.5" class="sb" fill="#3e9fe0" textLength="6.5" lengthAdjust="spacingAndGlyphs">2</text>
<text x="737" y="369.5" font-size="34" class="sb" fill="#2278cf" stroke="#2278cf" stroke-width="1.8" stroke-linejoin="round" textLength="25" lengthAdjust="spacingAndGlyphs">A</text>
<text x="739.6" y="368.3" font-size="30" class="s" fill="#fff" stroke="#2278cf" stroke-width="1.5" textLength="19.8" lengthAdjust="spacingAndGlyphs">A</text>
<path d="M772.6 356.6 L777 361.0 L781.4 356.6" fill="none" stroke="#444" stroke-width="2" stroke-linecap="round" stroke-linejoin="round"/>
<rect x="804" y="364.8" width="28" height="7.6" fill="#ffff00"/>
<g transform="translate(821.3 353) rotate(-38)"><rect x="-10.5" y="-4.2" width="21" height="8.4" rx="3.6" fill="#fafafa" stroke="#555" stroke-width="1.9"/></g>
<path d="M806 364.3 L812.3 356.2 L817.8 363 L811 364.3 Z" fill="#666" stroke="#666" stroke-width="1" stroke-linejoin="round"/>
<path d="M845.9 356.6 L850.3 361.0 L854.6999999999999 356.6" fill="none" stroke="#444" stroke-width="2" stroke-linecap="round" stroke-linejoin="round"/>
<text x="880" y="364" font-size="28" class="s" fill="#444" textLength="16.7" lengthAdjust="spacingAndGlyphs">A</text>
<rect x="874" y="365.2" width="28.2" height="7.4" fill="#ee0000"/>
<path d="M915.9 356.6 L920.3 361.0 L924.6999999999999 356.6" fill="none" stroke="#444" stroke-width="2" stroke-linecap="round" stroke-linejoin="round"/>
<rect x="969.7" y="286.55" width="5.5" height="5.5" fill="#2a8dd8"/>
<rect x="979" y="288.1" width="17.8" height="2.4" fill="#686868"/>
<rect x="969.7" y="297.25" width="5.5" height="5.5" fill="#2a8dd8"/>
<rect x="979" y="298.8" width="17.8" height="2.4" fill="#686868"/>
<rect x="969.7" y="307.85" width="5.5" height="5.5" fill="#2a8dd8"/>
<rect x="979" y="309.4" width="17.8" height="2.4" fill="#686868"/>
<path d="M1011.8000000000001 299.40000000000003 L1016.2 303.8 L1020.6 299.40000000000003" fill="none" stroke="#444" stroke-width="2" stroke-linecap="round" stroke-linejoin="round"/>
<text x="1040.2" y="293.1" font-size="10.5" class="sb" fill="#2a8dd8" textLength="5.2" lengthAdjust="spacingAndGlyphs">1</text>
<rect x="1049" y="288.1" width="17.8" height="2.4" fill="#686868"/>
<text x="1040.2" y="303.8" font-size="10.5" class="sb" fill="#2a8dd8" textLength="5.2" lengthAdjust="spacingAndGlyphs">2</text>
<rect x="1049" y="298.8" width="17.8" height="2.4" fill="#686868"/>
<text x="1040.2" y="314.40000000000003" font-size="10.5" class="sb" fill="#2a8dd8" textLength="5.2" lengthAdjust="spacingAndGlyphs">3</text>
<rect x="1049" y="309.4" width="17.8" height="2.4" fill="#686868"/>
<path d="M1082.1 299.40000000000003 L1086.5 303.8 L1090.9 299.40000000000003" fill="none" stroke="#444" stroke-width="2" stroke-linecap="round" stroke-linejoin="round"/>
<text x="1110.3" y="293.1" font-size="10.5" class="sb" fill="#2a8dd8" textLength="4.6" lengthAdjust="spacingAndGlyphs">1</text>
<rect x="1119" y="288.1" width="18" height="2.4" fill="#686868"/>
<text x="1114.8" y="303.4" font-size="11" class="sb" fill="#2a8dd8" textLength="6.5" lengthAdjust="spacingAndGlyphs">a</text>
<rect x="1125.2" y="298.8" width="11.8" height="2.4" fill="#686868"/>
<text x="1124" y="314.40000000000003" font-size="11" class="sb" fill="#2a8dd8" textLength="3" lengthAdjust="spacingAndGlyphs">i</text>
<rect x="1130" y="309.4" width="7" height="2.4" fill="#686868"/>
<path d="M1148.1 299.40000000000003 L1152.5 303.8 L1156.9 299.40000000000003" fill="none" stroke="#444" stroke-width="2" stroke-linecap="round" stroke-linejoin="round"/>
<rect x="1190.9" y="288.1" width="25.2" height="2.4" fill="#686868"/>
<rect x="1190.9" y="309.4" width="25.2" height="2.4" fill="#686868"/>
<rect x="1205.7" y="295.2" width="10.4" height="2.4" fill="#686868"/>
<rect x="1205.7" y="302.1" width="10.4" height="2.4" fill="#686868"/>
<path d="M1201.2 299.9 H1192.1000000000001 M1195.9 296.2 L1192.1000000000001 299.9 L1195.9 303.6" fill="none" stroke="#2a8dd8" stroke-width="2.1" stroke-linecap="round" stroke-linejoin="round"/>
<rect x="1233.7" y="288.1" width="25.2" height="2.4" fill="#686868"/>
<rect x="1233.7" y="309.4" width="25.2" height="2.4" fill="#686868"/>
<rect x="1248.5" y="295.2" width="10.4" height="2.4" fill="#686868"/>
<rect x="1248.5" y="302.1" width="10.4" height="2.4" fill="#686868"/>
<path d="M1234.0 299.9 H1243.0 M1239.3 296.2 L1243.0 299.9 L1239.3 303.6" fill="none" stroke="#2a8dd8" stroke-width="2.1" stroke-linecap="round" stroke-linejoin="round"/>
<text x="1284.7" y="298.9" font-size="17.2" class="sb" fill="#2a8dd8" textLength="13.3" lengthAdjust="spacingAndGlyphs">A</text>
<text x="1286" y="314.8" font-size="14.6" class="sb" fill="#444" textLength="10.8" lengthAdjust="spacingAndGlyphs">Я</text>
<path d="M1307.7 287 V313.6 M1302.4 308.4 L1307.7 313.8 L1313 308.4" fill="none" stroke="#444" stroke-width="1.9" stroke-linecap="round" stroke-linejoin="round"/>
<text x="1342.8" y="306.6" font-size="26" class="sb" fill="#3b3b3b" textLength="18.5" lengthAdjust="spacingAndGlyphs">¶</text>
<rect x="971.6" y="345.4" width="25.2" height="2.4" fill="#686868"/>
<rect x="971.6" y="352.6" width="17.8" height="2.4" fill="#686868"/>
<rect x="971.6" y="359.8" width="25.2" height="2.4" fill="#686868"/>
<rect x="971.6" y="366.9" width="17.8" height="2.4" fill="#686868"/>
<rect x="1014.6" y="345.4" width="25.2" height="2.4" fill="#686868"/>
<rect x="1018.3" y="352.6" width="17.8" height="2.4" fill="#686868"/>
<rect x="1014.6" y="359.8" width="25.2" height="2.4" fill="#686868"/>
<rect x="1018.3" y="366.9" width="17.8" height="2.4" fill="#686868"/>
<rect x="1057.6" y="345.4" width="25.2" height="2.4" fill="#686868"/>
<rect x="1065.0" y="352.6" width="17.8" height="2.4" fill="#686868"/>
<rect x="1057.6" y="359.8" width="25.2" height="2.4" fill="#686868"/>
<rect x="1065.0" y="366.9" width="17.8" height="2.4" fill="#686868"/>
<rect x="1093.6" y="338.6" width="39" height="40.4" fill="#c6c6c6" stroke="#909090" stroke-width="1.3"/>
<rect x="1100.6" y="345.4" width="25.2" height="2.4" fill="#686868"/>
<rect x="1100.6" y="352.6" width="25.2" height="2.4" fill="#686868"/>
<rect x="1100.6" y="359.8" width="25.2" height="2.4" fill="#686868"/>
<rect x="1100.6" y="366.9" width="25.2" height="2.4" fill="#686868"/>
<rect x="1164.6" y="345.4" width="15.9" height="2.4" fill="#686868"/>
<rect x="1164.6" y="352.6" width="15.9" height="2.4" fill="#686868"/>
<rect x="1164.6" y="359.8" width="15.9" height="2.4" fill="#686868"/>
<rect x="1164.6" y="366.9" width="15.9" height="2.4" fill="#686868"/>
<path d="M1156.1 346.3 V369.8 M1152.4 350.2 L1156.1 346.3 L1159.8 350.2 M1152.4 365.9 L1156.1 369.8 L1159.8 365.9" fill="none" stroke="#2a8dd8" stroke-width="2.1" stroke-linecap="round" stroke-linejoin="round"/>
<path d="M1189.6 356.6 L1194 361.0 L1198.4 356.6" fill="none" stroke="#444" stroke-width="2" stroke-linecap="round" stroke-linejoin="round"/>
<rect x="1231.6" y="367" width="27.4" height="4.8" fill="#fff" stroke="#8a8a8a" stroke-width="1.2"/>
<path d="M1236.8 355.2 L1245.4 346.4 L1254.2 355 L1245.6 363.8 Z" fill="#f6f6f6" stroke="#555" stroke-width="1.8" stroke-linejoin="round"/>
<path d="M1243.2 348.6 V346 Q1243.2 343.4 1245.6 343.4 Q1248 343.4 1248 346 V349.2" fill="none" stroke="#555" stroke-width="1.6"/>
<path d="M1252 350.8 Q1257.6 350.6 1257 361 Q1255.2 356.6 1252.4 355.4 Z" fill="#1f72b8" stroke="#1f72b8" stroke-width="1.2" stroke-linejoin="round"/>
<path d="M1272.8 356.6 L1277.2 361.0 L1281.6000000000001 356.6" fill="none" stroke="#444" stroke-width="2" stroke-linecap="round" stroke-linejoin="round"/>
<path d="M1301.6 344.6 H1327.2 M1301.6 344.6 V368 M1327.2 344.6 V368 M1314.4 344.6 V368 M1301.6 356.6 H1327.2" fill="none" stroke="#5a5a5a" stroke-width="1.5" stroke-dasharray="1.7 1.7"/>
<rect x="1300.9" y="367.6" width="27" height="2.6" fill="#555"/>
<path d="M1343.0 356.6 L1347.4 361.0 L1351.8000000000002 356.6" fill="none" stroke="#444" stroke-width="2" stroke-linecap="round" stroke-linejoin="round"/>
<rect x="1403.5" y="269.5" width="600" height="106.5" fill="#fff" stroke="#d6d6d6" stroke-width="1.2"/>
<rect x="1535.5" y="273" width="127.5" height="98.5" fill="#fff" stroke="#c2c2c2" stroke-width="1.2"/>
<rect x="1539.5" y="277" width="119.5" height="90.5" fill="none" stroke="#c9c9c9" stroke-width="5.5"/>
<rect x="1535.5" y="273" width="127.5" height="98.5" fill="none" stroke="#a6a6a6" stroke-width="1.4"/>
<clipPath id="st1"><rect x="1404" y="270" width="119.5" height="105"/></clipPath>
<clipPath id="st2"><rect x="1540" y="277" width="112.5" height="90"/></clipPath>
<clipPath id="st3"><rect x="1664" y="277" width="117" height="90"/></clipPath>
<clipPath id="st4"><rect x="1790" y="277" width="120.5" height="90"/></clipPath>
<g clip-path="url(#st1)">
<text x="1417.5" y="321.6" font-size="53" class="sb" fill="#2f5597" stroke="#2f5597" stroke-width="1.1" font-style="italic" textLength="131" lengthAdjust="spacingAndGlyphs">АаБб</text>
</g>
<g clip-path="url(#st2)">
<text x="1546" y="316.6" font-size="22.5" class="s" fill="#111" textLength="117" lengthAdjust="spacingAndGlyphs">АаБбВвГгД</text>
</g>
<g clip-path="url(#st3)">
<text x="1674.5" y="316.6" font-size="22.5" class="s" fill="#111" textLength="117" lengthAdjust="spacingAndGlyphs">АаБбВвГгД</text>
</g>
<g clip-path="url(#st4)">
<text x="1804" y="319.5" font-size="33" class="s" fill="#f3f6fb" stroke="#4a6fb0" stroke-width="0.01" textLength="135" lengthAdjust="spacingAndGlyphs">АаБбВвГ</text>
<text x="1804" y="319.5" font-size="33" class="s" fill="#6483bb" textLength="135" lengthAdjust="spacingAndGlyphs">АаБбВвГ</text>
</g>
<text x="1933" y="317.5" font-size="27" class="s" fill="#6a88be" textLength="80" lengthAdjust="spacingAndGlyphs">АаБбВ</text>
<text x="1413" y="359" font-size="21" class="s" fill="#666" textLength="112" lengthAdjust="spacingAndGlyphs">¶ Зоголов...</text>
<text x="1541.5" y="359" font-size="21" class="s" fill="#666" textLength="112" lengthAdjust="spacingAndGlyphs">¶ Обычный</text>
<text x="1674.5" y="359" font-size="21" class="s" fill="#666" textLength="106" lengthAdjust="spacingAndGlyphs">¶ Без инт...</text>
<text x="1803" y="359" font-size="21" class="s" fill="#666" textLength="107.5" lengthAdjust="spacingAndGlyphs">Заголово...</text>
<text x="1931.5" y="359" font-size="21" class="s" fill="#666" textLength="75" lengthAdjust="spacingAndGlyphs">Заголов</text>
<path d="M97 279.5 H89.5 Q87.5 279.5 87.5 281.5 V322.5 Q87.5 324.5 89.5 324.5 H110 M115 279.5 H122.5 Q124.5 279.5 124.5 281.5 V291" fill="none" stroke="#f09a37" stroke-width="2.6" stroke-linejoin="round"/>
<rect x="89.5" y="282" width="33" height="41" fill="#faf9f8"/>
<path d="M97 279.5 H89.5 Q87.5 279.5 87.5 281.5 V322.5 Q87.5 324.5 89.5 324.5 H110 M115 279.5 H122.5 Q124.5 279.5 124.5 281.5 V291" fill="none" stroke="#f09a37" stroke-width="2.6" stroke-linejoin="round"/>
<path d="M96 285.5 V280 Q96 278.5 97.5 278.5 H101 Q101 273.5 106 273.5 Q111 273.5 111 278.5 H114.5 Q116 278.5 116 280 V285.5 Z" fill="#f3f2f1" stroke="#777" stroke-width="1.5" stroke-linejoin="round"/>
<rect x="111.5" y="295" width="23" height="30" fill="#fafafa" stroke="#666" stroke-width="2"/>
<path d="M169.4 273.8 L179.3 295.2 M179.4 273.8 L169.8 295.2" fill="none" stroke="#a3a3a3" stroke-width="2" stroke-linecap="round"/>
<circle cx="169.2" cy="297.6" r="2.7" fill="none" stroke="#a3a3a3" stroke-width="1.9"/>
<circle cx="180" cy="297.6" r="2.7" fill="none" stroke="#a3a3a3" stroke-width="1.9"/>
<path d="M171 338.5 H161.3 V316.5 H168.5 L172.5 320.5 V322" fill="#ebebeb" stroke="#a3a3a3" stroke-width="2" stroke-linejoin="round"/>
<path d="M171.5 321.8 H181.5 L187.8 328 V342.6 H171.5 Z" fill="#ebebeb" stroke="#a3a3a3" stroke-width="2" stroke-linejoin="round"/>
<path d="M181.3 322 V328.2 H187.6" fill="none" stroke="#a3a3a3" stroke-width="1.6"/>
<line x1="175.5" y1="333" x2="184" y2="333" stroke="#a3a3a3" stroke-width="1.6" />
<line x1="175.5" y1="337.5" x2="184" y2="337.5" stroke="#a3a3a3" stroke-width="1.6" />
<path d="M171.5 366 L161 371 L172 384.3 L182.5 375.5 Z" fill="#fdf3e6" stroke="#ee8a26" stroke-width="2" stroke-linejoin="round"/>
<path d="M161 371 L172 384.3 L169.5 377.5 Z" fill="#ee8a26" stroke="#ee8a26" stroke-width="1" stroke-linejoin="round"/>
<path d="M178.5 368.5 L187.3 360" fill="none" stroke="#555" stroke-width="5" stroke-linecap="round"/>
<path d="M178.5 368.5 L187.3 360" fill="none" stroke="#e8e8e8" stroke-width="1.6" stroke-linecap="round"/>
<path d="M172.8 362.8 L184.2 374.2" fill="none" stroke="#555" stroke-width="5.4" stroke-linecap="butt"/>
<path d="M173.8 363.8 L183.2 373.2" fill="none" stroke="#e8e8e8" stroke-width="1.8" stroke-linecap="butt"/>
</g>
<text x="186" y="71.7" font-size="33" class="s" fill="#000" textLength="91.6" lengthAdjust="spacingAndGlyphs">gdz.by</text>
<text x="1630" y="143.7" font-size="33" class="s" fill="#000" textLength="91.6" lengthAdjust="spacingAndGlyphs">gdz.by</text>
<text x="1242" y="195.7" font-size="33" class="s" fill="#000" textLength="91.6" lengthAdjust="spacingAndGlyphs">gdz.by</text>
<text x="626" y="271.7" font-size="33" class="s" fill="#000" textLength="91.6" lengthAdjust="spacingAndGlyphs">gdz.by</text>
<text x="1230" y="419.7" font-size="33" class="s" fill="#000" textLength="91.6" lengthAdjust="spacingAndGlyphs">gdz.by</text>
<text x="850.4" y="511.8" font-size="33" class="s" fill="#000" textLength="91.6" lengthAdjust="spacingAndGlyphs">gdz.by</text>
<text x="170" y="599.7" font-size="33" class="s" fill="#000" textLength="91.6" lengthAdjust="spacingAndGlyphs">gdz.by</text>
<text x="1662" y="699.7" font-size="33" class="s" fill="#000" textLength="91.6" lengthAdjust="spacingAndGlyphs">gdz.by</text>
<text x="174" y="879.7" font-size="33" class="s" fill="#000" textLength="91.6" lengthAdjust="spacingAndGlyphs">gdz.by</text>
<text x="1266" y="951.7" font-size="33" class="s" fill="#000" textLength="91.6" lengthAdjust="spacingAndGlyphs">gdz.by</text>
<text x="482" y="1011.7" font-size="33" class="s" fill="#000" textLength="91.6" lengthAdjust="spacingAndGlyphs">gdz.by</text>
<text x="1662" y="1067.7" font-size="33" class="s" fill="#000" textLength="91.6" lengthAdjust="spacingAndGlyphs">gdz.by</text>
</svg>
</body></html>
